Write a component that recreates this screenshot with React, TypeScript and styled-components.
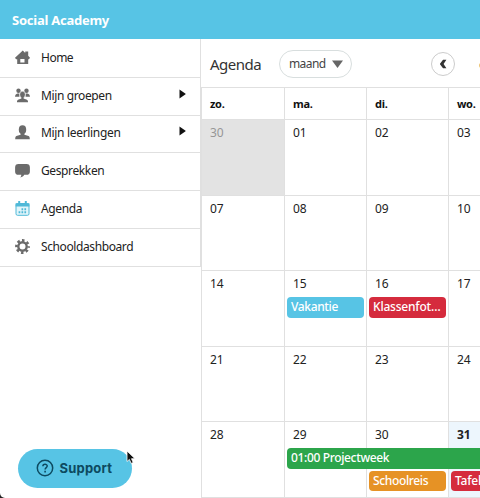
import React from "react";
import styled, { createGlobalStyle } from "styled-components";

const GlobalStyle = createGlobalStyle`
  * {
    box-sizing: border-box;
  }
  body {
    margin: 0;
    overflow: hidden;
    background: #222222;
    color: #222222;
    font-family: "Noto Sans", "Open Sans", sans-serif;
    font-size: 12px;
  }
`;

const PageContainer = styled.div`
  display: flex;
  flex-direction: column;
  width: 480px;
  height: 498px;
  overflow: hidden;
  border-bottom-left-radius: 5px;
  background: #ffffff;
`;

const TopBar = styled.header`
  display: flex;
  align-items: center;
  flex: none;
  height: 39px;
  padding: 0 12px;
  background: #57c4e5;
  color: #ffffff;
  font-size: 13px;
  font-weight: 700;
  letter-spacing: -0.25px;
`;

const Body = styled.div`
  display: flex;
  flex: 1;
  min-height: 0;
`;

const Sidebar = styled.aside`
  display: flex;
  flex-direction: column;
  justify-content: space-between;
  flex: none;
  width: 201px;
`;

const Menu = styled.nav`
  padding-top: 1px;
  border-right: 1px solid #e0e0e0;
`;

const MenuItem = styled.div`
  display: flex;
  align-items: center;
  height: 37.75px;
  padding: 0 14px 2px 15px;
  border-bottom: 1px solid #e0e0e0;
`;

const MenuIcon = styled.svg<{ $active?: boolean }>`
  flex: none;
  width: 15px;
  height: 15px;
  margin-right: 11px;
  color: ${({ $active }) => ($active ? "#4fb9d8" : "#6b6b6b")};
`;

const MenuLabel = styled.span<{ $spacing: number }>`
  flex: 1;
  letter-spacing: ${({ $spacing }) => $spacing}px;
`;

const SubmenuArrow = styled.svg`
  width: 7px;
  height: 10px;
  margin-top: -3px;
`;

const SupportButton = styled.button`
  display: flex;
  align-items: center;
  gap: 6px;
  width: 114px;
  height: 39px;
  margin: 0 0 10.5px 17.5px;
  padding: 0 0 0 18px;
  border: none;
  border-radius: 20px;
  background: #57c4e5;
  color: #0d4a60;
  font-family: Inter, sans-serif;
  font-size: 13px;
  font-weight: 700;
  letter-spacing: 0.2px;
`;

const Cursor = styled.svg`
  position: absolute;
  left: 126px;
  top: 450px;
  width: 10px;
  height: 15px;
`;

const Main = styled.main`
  flex: 1;
  min-width: 0;
  overflow: hidden;
`;

const Toolbar = styled.div`
  display: flex;
  align-items: center;
  width: 340px;
  height: 48px;
  padding: 1px 0 0 9px;
`;

const Title = styled.h1`
  width: 69px;
  margin: 0;
  color: #333333;
  font-size: 15px;
  font-weight: 400;
  letter-spacing: -0.5px;
`;

const ViewSelect = styled.div`
  display: flex;
  align-items: center;
  justify-content: space-between;
  flex: none;
  width: 73px;
  height: 28px;
  padding: 0 8px 0 9px;
  border: 1px solid #d8dede;
  border-radius: 14px;
  color: #444444;
  letter-spacing: -0.6px;
`;

const PrevButton = styled.div`
  display: flex;
  align-items: center;
  justify-content: center;
  flex: none;
  width: 24px;
  height: 24px;
  margin: 0 24px 0 79px;
  border: 1px solid #cccccc;
  border-radius: 50%;
`;

const MonthLabel = styled.span`
  color: #333333;
  font-size: 13px;
`;

const Calendar = styled.div`
  width: 330px;
  border-top: 1px solid #e0e0e0;
  border-left: 1px solid #e0e0e0;
`;

const WeekRow = styled.div`
  display: grid;
  grid-template-columns: 83px repeat(3, 82px);
`;

const WeekHeader = styled(WeekRow)`
  height: 31px;
`;

const HeaderCell = styled.div`
  padding: 8px 8px 0;
  border-right: 1px solid #e0e0e0;
  color: #111111;
  font-size: 11px;
  line-height: 15px;
  font-weight: 700;
  letter-spacing: -0.3px;
`;

const Week = styled(WeekRow)`
  grid-template-rows: 27px 22.5px 22.5px 1fr;
  height: 75.6px;

  &:last-child {
    height: 76.6px;
    border-bottom: 1px solid #e0e0e0;
  }
`;

const Day = styled.div<{ $column: number; $outside: boolean; $today: boolean }>`
  grid-row: 1 / -1;
  grid-column: ${({ $column }) => $column};
  padding: 5px 8px;
  border-top: 1px solid #e0e0e0;
  border-right: 1px solid #e0e0e0;
  background: ${({ $outside, $today }) =>
    $outside ? "#e3e3e3" : $today ? "#edf6fd" : "#ffffff"};
  color: ${({ $outside }) => ($outside ? "#969696" : "#222222")};
  font-weight: ${({ $today }) => ($today ? 700 : 400)};
  line-height: 16px;
`;

const Event = styled.div<{
  $color: string;
  $start: number;
  $span: number;
  $line: number;
  $spacing: number;
}>`
  grid-row: ${({ $line }) => $line + 1};
  grid-column: ${({ $start, $span }) => `${$start} / span ${$span}`};
  height: 20.5px;
  margin: 0 3px 0 2px;
  padding: 0 4px;
  overflow: hidden;
  border-radius: 4px;
  background: ${({ $color }) => $color};
  color: #ffffff;
  font-weight: 500;
  line-height: 20px;
  letter-spacing: ${({ $spacing }) => $spacing}px;
  white-space: nowrap;
`;

const menuItems = [
  { icon: "home", label: "Home", spacing: -0.5 },
  { icon: "groups", label: "Mijn groepen", spacing: -0.38 },
  { icon: "person", label: "Mijn leerlingen", spacing: -0.32 },
  { icon: "chat", label: "Gesprekken", spacing: -0.38 },
  { icon: "agenda", label: "Agenda", spacing: -0.38, active: true },
  { icon: "gear", label: "Schooldashboard", spacing: -0.4 },
];

const submenus = ["Mijn groepen", "Mijn leerlingen"];

const weekdays = ["zo.", "ma.", "di.", "wo."];

const weeks = [
  { days: ["30", "01", "02", "03"], events: [] },
  { days: ["07", "08", "09", "10"], events: [] },
  {
    days: ["14", "15", "16", "17"],
    events: [
      { label: "Vakantie", color: "#57c4e5", start: 2, span: 1, line: 1, spacing: -0.35 },
      { label: "Klassenfot…", color: "#d52b3d", start: 3, span: 1, line: 1, spacing: -0.2 },
    ],
  },
  { days: ["21", "22", "23", "24"], events: [] },
  {
    days: ["28", "29", "30", "31"],
    events: [
      { label: "01:00 Projectweek", color: "#2ca54b", start: 2, span: 3, line: 1, spacing: -0.35 },
      { label: "Schoolreis", color: "#e69225", start: 3, span: 1, line: 2, spacing: -0.35 },
      { label: "Tafels", color: "#d52b3d", start: 4, span: 1, line: 2, spacing: -0.2 },
    ],
  },
];

const iconShapes: Record<string, React.ReactNode> = {
  home: (
    <path
      fill="currentColor"
      fillRule="evenodd"
      d="M7.8.6 10.2 2.900V1.400h3v4.400L15 7.700l-1 1.600h-.8V14H2.200V9.300H1L0 7.700zM5.300 9v3.400h4.200V9z"
    />
  ),
  groups: (
    <g fill="currentColor">
      <circle cx="3.500" cy="2.800" r="2.200" />
      <circle cx="11.500" cy="2.800" r="2.200" />
      <path d="M0 8.700c.2-2 1-2.700 2.500-3.200h1.700l.3 3.200zM15 8.700c-.2-2-1-2.700-2.500-3.200h-1.700l-.3 3.200z" />
      <ellipse cx="7.500" cy="6.600" rx="2.800" ry="3.300" stroke="#ffffff" strokeWidth="0.500" />
      <path d="M6.400 8.500h2.200v2l3.400 1.200c.8.4 1 1.200 1.100 2.600H1.900c.1-1.400.3-2.200 1.100-2.600l3.400-1.200z" />
    </g>
  ),
  person: (
    <g fill="currentColor">
      <ellipse cx="7.500" cy="4.700" rx="3.700" ry="4.400" />
      <path d="M5.600 7.500h3.800v2.300l4.200 1.300c.9.4 1.100 1.400 1.200 3.200H.2c.1-1.800.3-2.800 1.200-3.200l4.200-1.300z" />
    </g>
  ),
  chat: (
    <path
      fill="currentColor"
      d="M3.500 1h8A3.400 3.400 0 0 1 14.900 4.400v4a3.400 3.400 0 0 1-3.400 3.400H9.300c-.8 1.400-2 2.300-4.100 2.700.8-.8 1.100-1.700 1.100-2.700H3.500A3.400 3.400 0 0 1 .1 8.400v-4A3.400 3.400 0 0 1 3.500 1z"
    />
  ),
  agenda: (
    <g fill="none" stroke="currentColor">
      <rect x="1" y="2.500" width="13" height="11.800" rx="1.500" fill="#e2f5fa" />
      <path d="M.6 3.800h13.800" strokeWidth="3.200" />
      <path d="M4.200 0v3M10.800 0v3" strokeWidth="2" />
      <path d="M6.500 8.200h1.700M9.400 8.200h1.700M3.600 11.200h1.700M6.500 11.200h1.700M9.400 11.200h1.700" strokeWidth="1.900" />
    </g>
  ),
  gear: (
    <g fill="none" stroke="currentColor">
      <circle cx="7.500" cy="7.500" r="4.200" strokeWidth="2.400" />
      <circle cx="7.500" cy="7.500" r="6.100" strokeWidth="2.600" strokeDasharray="2.500 2.291" strokeDashoffset="1.250" />
    </g>
  ),
};

export default function App() {
  return (
    <>
      <GlobalStyle />
      <PageContainer>
        <TopBar>Social Academy</TopBar>
        <Body>
          <Sidebar>
            <Menu>
              {menuItems.map((item) => (
                <MenuItem key={item.label}>
                  <MenuIcon $active={item.active} viewBox="0 0 15 15">
                    {iconShapes[item.icon]}
                  </MenuIcon>
                  <MenuLabel $spacing={item.spacing}>{item.label}</MenuLabel>
                  {submenus.includes(item.label) && (
                    <SubmenuArrow viewBox="0 0 7 10">
                      <path d="M.5.5v9L6.900 5z" fill="#111111" />
                    </SubmenuArrow>
                  )}
                </MenuItem>
              ))}
            </Menu>
            <SupportButton>
              <svg width="18" height="18" viewBox="0 0 18 18" fill="none" stroke="currentColor">
                <circle cx="9" cy="9" r="7.700" strokeWidth="1.500" />
                <path d="M6.900 7.300c0-2.700 4.300-2.600 4.300-.2 0 1.500-2.100 1.500-2.100 3.300" strokeWidth="1.500" />
                <path d="M9.100 11.700v1.700" strokeWidth="1.600" />
              </svg>
              Support
            </SupportButton>
          </Sidebar>
          <Main>
            <Toolbar>
              <Title>Agenda</Title>
              <ViewSelect>
                maand
                <svg width="11" height="8" viewBox="0 0 11 8">
                  <path d="M0 .5h11L5.500 8z" fill="#666666" />
                </svg>
              </ViewSelect>
              <PrevButton>
                <svg width="8" height="10" viewBox="0 0 8 10">
                  <path d="M4 .8h3.400L4.600 5l2.800 4.200H4L.8 5z" fill="#333333" />
                </svg>
              </PrevButton>
              <MonthLabel>oktober</MonthLabel>
            </Toolbar>
            <Calendar>
              <WeekHeader>
                {weekdays.map((day) => (
                  <HeaderCell key={day}>{day}</HeaderCell>
                ))}
              </WeekHeader>
              {weeks.map((week, weekIdx) => (
                <Week key={weekIdx}>
                  {week.days.map((day, idx) => (
                    <Day
                      key={day}
                      $column={idx + 1}
                      $outside={weekIdx === 0 && day === "30"}
                      $today={day === "31"}
                    >
                      {day}
                    </Day>
                  ))}
                  {week.events.map((event) => (
                    <Event
                      key={event.label}
                      $color={event.color}
                      $start={event.start}
                      $span={event.span}
                      $line={event.line}
                      $spacing={event.spacing}
                    >
                      {event.label}
                    </Event>
                  ))}
                </Week>
              ))}
            </Calendar>
          </Main>
        </Body>
        <Cursor viewBox="0 0 10 15">
          <path
            d="M1 1v10.500l2.400-2.100 1.700 4 2.100-.9-1.700-3.800H9z"
            fill="#111111"
            stroke="#ffffff"
            strokeWidth="0.800"
          />
        </Cursor>
      </PageContainer>
    </>
  );
}
